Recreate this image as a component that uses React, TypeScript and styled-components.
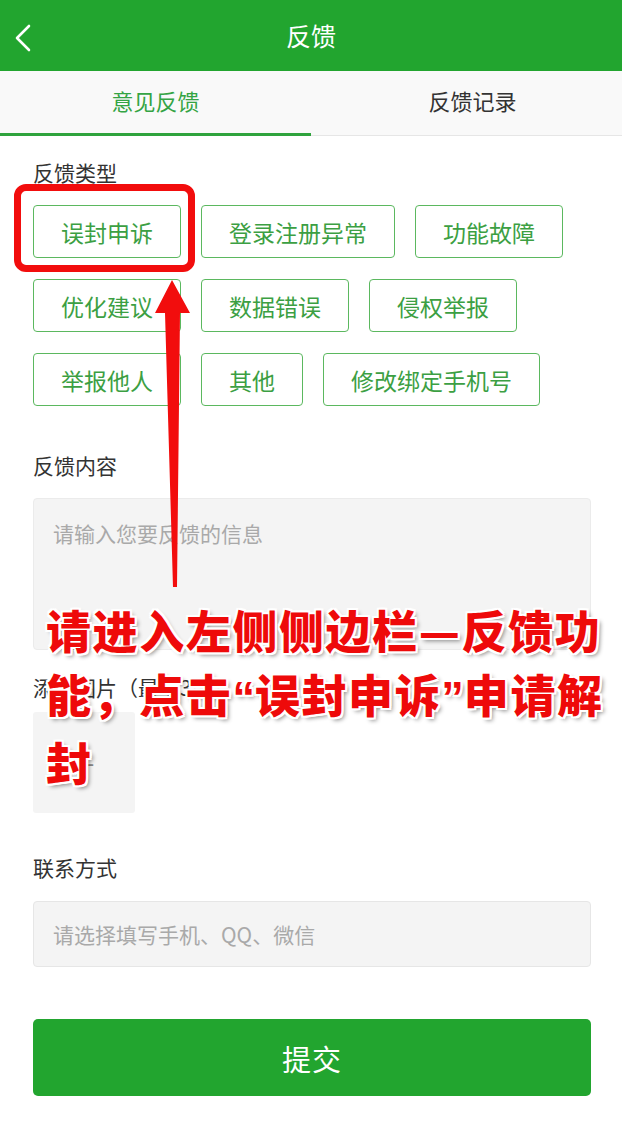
import React from 'react';
import styled, { createGlobalStyle } from 'styled-components';

const GlobalStyle = createGlobalStyle`
  html, body {
    margin: 0;
    padding: 0;
    background: #fff;
  }
  body {
    font-family: 'Noto Sans CJK SC', 'Noto Sans', sans-serif;
    color: #333;
  }
`;

const GREEN = '#22a52f';

const Page = styled.div`
  position: relative;
  width: 622px;
  min-height: 1128px;
  background: #fff;
  overflow: hidden;
`;

// top bar
const Header = styled.header`
  height: 71px;
  background: ${GREEN};
  display: flex;
  align-items: center;
  justify-content: center;
  position: relative;
`;

const BackButton = styled.button`
  position: absolute;
  left: 8px;
  top: 20px;
  width: 30px;
  height: 36px;
  padding: 0;
  border: none;
  background: none;
  display: flex;
  align-items: center;
  justify-content: center;
`;

const Title = styled.h1`
  margin: 0;
  font-size: 25px;
  font-weight: 400;
  color: #fff;
  line-height: 1;
`;

// tabs
const TabBar = styled.nav`
  height: 65px;
  display: flex;
  background: #f9f9f9;
  border-bottom: 1px solid #e6e6e6;
  box-sizing: border-box;
`;

const Tab = styled.div<{ active?: boolean; shift?: number }>`
  flex: none;
  width: 50%;
  box-sizing: border-box;
  display: flex;
  align-items: center;
  justify-content: center;
  font-size: 22px;
  color: ${(p) => (p.active ? '#34a444' : '#333')};
  border-bottom: 3px solid ${(p) => (p.active ? '#2fa33d' : 'transparent')};
  margin-bottom: -1px;
  padding-bottom: 4px;
  padding-left: ${(p) => p.shift || 0}px;
`;

// form
const Form = styled.div`
  padding: 0 31px 0 33px;
  display: flex;
  flex-direction: column;
`;

const Label = styled.div<{ gap: number }>`
  margin-top: ${(p) => p.gap}px;
  font-size: 21px;
  line-height: 22px;
  height: 22px;
  color: #333;
  white-space: nowrap;
`;

const ChipGrid = styled.div`
  margin-top: 22px;
  display: flex;
  flex-wrap: wrap;
  gap: 21px 20px;
  width: 545px;
`;

const Chip = styled.div`
  height: 53px;
  box-sizing: border-box;
  padding: 0 27px;
  border: 1.5px solid #5bb85f;
  border-radius: 4px;
  display: flex;
  align-items: center;
  font-size: 23px;
  color: #3c9f43;
  white-space: nowrap;
`;

const TextArea = styled.div`
  margin-top: 22px;
  height: 152px;
  box-sizing: border-box;
  background: #f4f4f4;
  border: 1px solid #ebebeb;
  border-radius: 4px;
  padding: 19px 19px;
  font-size: 21px;
  color: #a9a9a9;
`;

const UploadBox = styled.div`
  margin-top: 14px;
  width: 102px;
  height: 101px;
  background: #f4f4f4;
  border-radius: 3px;
  display: flex;
  align-items: center;
  justify-content: center;
  font-size: 40px;
  font-weight: 300;
  color: #888;
`;

const Input = styled.div`
  margin-top: 23px;
  height: 66px;
  box-sizing: border-box;
  background: #f4f4f4;
  border: 1px solid #e6e6e6;
  border-radius: 4px;
  padding: 0 19px;
  display: flex;
  align-items: center;
  font-size: 21px;
  color: #a9a9a9;
`;

const SubmitButton = styled.button`
  margin-top: 52px;
  height: 77px;
  border: none;
  border-radius: 5px;
  background: ${GREEN};
  color: #fff;
  font-family: inherit;
  font-size: 29px;
  letter-spacing: 1px;
`;

// annotation layered on top of the screenshot
const HighlightBox = styled.div`
  position: absolute;
  left: 14px;
  top: 184px;
  width: 181px;
  height: 88px;
  box-sizing: border-box;
  border: 7px solid #f20d0d;
  border-radius: 12px;
`;

const ArrowSvg = styled.svg`
  position: absolute;
  left: 0;
  top: 0;
  pointer-events: none;
`;

const Caption = styled.div`
  position: absolute;
  left: 46px;
  top: 598px;
  width: 575px;
  font-size: 45px;
  font-weight: 900;
  line-height: 64px;
  letter-spacing: 1.6px;
  color: #ee0a0a;
  text-shadow:
    2px 0 0 #fff, -2px 0 0 #fff, 0 2px 0 #fff, 0 -2px 0 #fff,
    2px 2px 0 #fff, -2px -2px 0 #fff, 2px -2px 0 #fff, -2px 2px 0 #fff,
    3px 3px 4px rgba(0, 0, 0, 0.45);
`;

const CaptionLine = styled.span`
  display: block;
  white-space: nowrap;
`;

const Quote = styled.span`
  font-family: 'Liberation Sans', Arial, sans-serif;
  font-weight: 700;
  letter-spacing: 0;
`;

const types = [
  '误封申诉',
  '登录注册异常',
  '功能故障',
  '优化建议',
  '数据错误',
  '侵权举报',
  '举报他人',
  '其他',
  '修改绑定手机号',
];

const App: React.FC = () => {
  return (
    <Page>
      <GlobalStyle />
      <Header>
        <BackButton aria-label="返回">
          <svg width="20" height="30" viewBox="0 0 20 30">
            <path d="M16 3 L4 15 L16 27" fill="none" stroke="#fff" strokeWidth="2.6" strokeLinecap="round" strokeLinejoin="round" />
          </svg>
        </BackButton>
        <Title>反馈</Title>
      </Header>

      <TabBar>
        <Tab active>意见反馈</Tab>
        <Tab shift={12}>反馈记录</Tab>
      </TabBar>

      <Form>
        <Label gap={25}>反馈类型</Label>
        <ChipGrid>
          {types.map((t) => (
            <Chip key={t}>{t}</Chip>
          ))}
        </ChipGrid>

        <Label gap={48}>反馈内容</Label>
        <TextArea>请输入您要反馈的信息</TextArea>

        <Label gap={26}>添加图片（最多3张）</Label>
        <UploadBox>+</UploadBox>

        <Label gap={43}>联系方式</Label>
        <Input>请选择填写手机、QQ、微信</Input>

        <SubmitButton>提交</SubmitButton>
      </Form>

      <HighlightBox />
      <ArrowSvg width="622" height="1128" viewBox="0 0 622 1128">
        <polygon
          points="172,280 190,313 180,313 177,587 173,587 165,313 155,313"
          fill="#f20d0d"
        />
      </ArrowSvg>
      <Caption>
        <CaptionLine>请进入左侧侧边栏—反馈功</CaptionLine>
        <CaptionLine>
          能，点击<Quote>“</Quote>误封申诉<Quote>”</Quote>申请解
        </CaptionLine>
        <CaptionLine>封</CaptionLine>
      </Caption>
    </Page>
  );
};

export default App;
